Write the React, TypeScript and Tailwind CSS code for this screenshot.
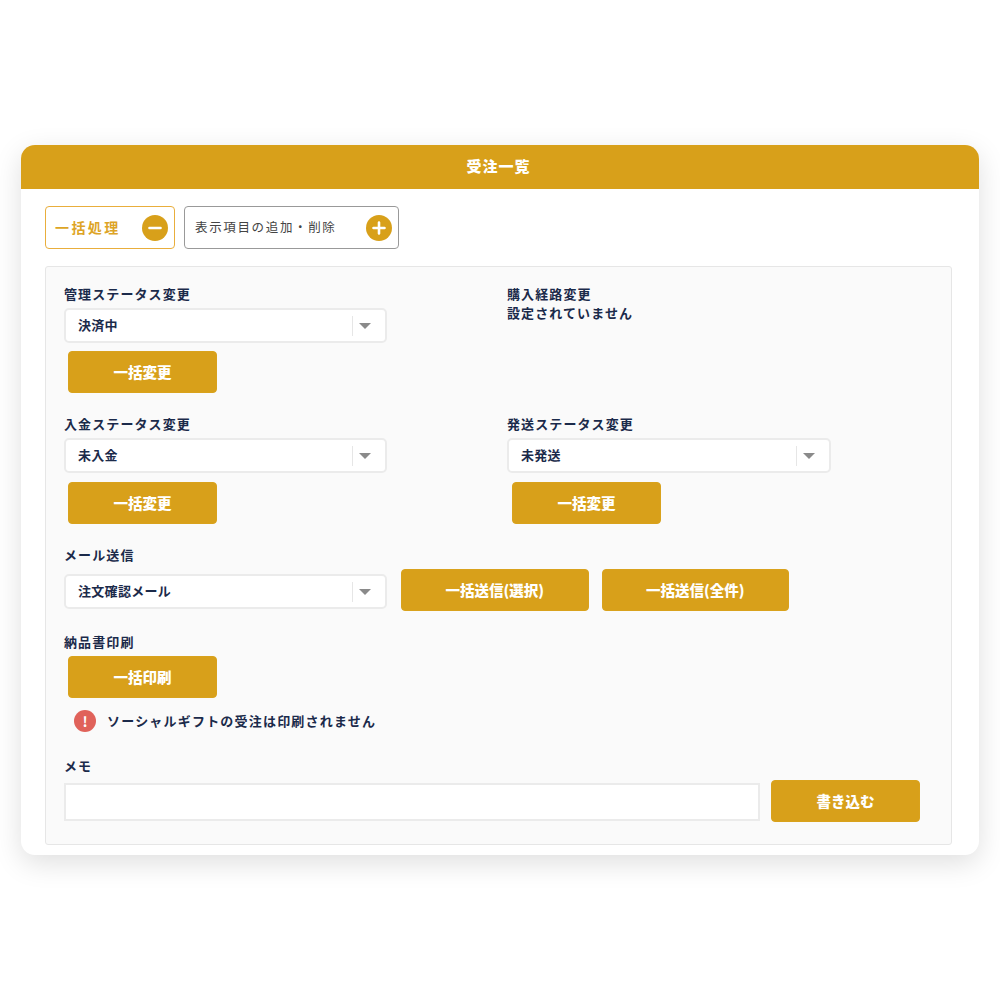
const font = { fontFamily: '"Noto Sans CJK JP", "Noto Sans", sans-serif' };

function Caret() {
  return <span className="ml-[6px] h-0 w-0 border-x-[6px] border-t-[6px] border-x-transparent border-t-[#8a8a8a]" />;
}

function Label({ children }: { children: string }) {
  return <div className="h-[18px] text-[13px] leading-[18px] font-bold tracking-[1.1px] text-[#1b2a4a]">{children}</div>;
}

function Select({ value, w = "w-[323px]" }: { value: string; w?: string }) {
  return (
    <div className={`flex h-[35px] ${w} items-center rounded-[5px] border-2 border-[#ebebeb] bg-white pl-[12px]`}>
      <span className="flex-1 pb-[2px] text-[13px] font-bold tracking-[0.3px] text-[#1b2a4a]">{value}</span>
      <span className="h-[20px] w-[1.5px] bg-[#e6e6e6]" />
      <Caret />
      <span className="w-[14px]" />
    </div>
  );
}

function Btn({ children, w = "w-[149px]", cls = "" }: { children: string; w?: string; cls?: string }) {
  return (
    <button className={`flex h-[42px] ${w} ${cls} items-center justify-center rounded-[4px] border border-[#d9a21c] bg-[#d8a01a] text-[14.5px] font-black text-white`}>
      <span className="pb-[1px]">{children}</span>
    </button>
  );
}

function Round({ plus }: { plus?: boolean }) {
  return (
    <svg width="26" height="26" viewBox="0 0 26 26" className="shrink-0">
      <circle cx="13" cy="13" r="13" fill="#d8a01a" />
      <path d={plus ? "M7.5 13h11M13 7.5v11" : "M7.5 13h11"} stroke="#fff" strokeWidth="2.6" strokeLinecap="round" />
    </svg>
  );
}

export default function App() {
  return (
    <div className="min-h-[1000px] bg-white px-[21px] pt-[145px]" style={font}>
      <div className="h-[710px] w-[958px] overflow-hidden rounded-[14px] bg-white shadow-[0_8px_28px_rgba(0,0,0,0.13)]">
        <div className="flex h-[44px] items-center justify-center bg-[#d8a01a] pb-[2px] pr-[3px] text-[15px] font-black tracking-[1px] text-white">受注一覧</div>

        <div className="px-[24px] pt-[17px]">
          <div className="flex gap-[9px]">
            <div className="flex h-[43px] w-[129.5px] items-center justify-between rounded-[4px] border border-[#e9ae3c] bg-white pl-[9px] pr-[6px]">
              <span className="text-[14px] font-bold tracking-[2.4px] text-[#dda426]">一括処理</span>
              <Round />
            </div>
            <div className="flex h-[43px] w-[215px] items-center justify-between rounded-[4px] border-[1.5px] border-[#999] bg-white pl-[10.5px] pr-[5.5px]">
              <span className="text-[12.5px] tracking-[1.65px] text-[#444]">表示項目の追加・削除</span>
              <Round plus />
            </div>
          </div>

          <div className="mt-[17px] h-[579px] w-[907px] rounded-[3px] border border-[#e6e6e6] bg-[#fafafa] pl-[18px] pt-[18px]">
            <div className="grid grid-cols-[443px_1fr]">
              <div>
                <Label>管理ステータス変更</Label>
                <div className="mt-[5px]"><Select value="決済中" /></div>
                <Btn cls="ml-[4px] mt-[8px]">一括変更</Btn>
              </div>
              <div>
                <Label>購入経路変更</Label>
                <div className="mt-[1px] text-[13px] leading-[18px] font-bold tracking-[1.1px] text-[#1b2a4a]">設定されていません</div>
              </div>
            </div>

            <div className="mt-[22px] grid grid-cols-[443px_1fr]">
              <div>
                <Label>入金ステータス変更</Label>
                <div className="mt-[5px]"><Select value="未入金" /></div>
                <Btn cls="ml-[4px] mt-[9px]">一括変更</Btn>
              </div>
              <div>
                <Label>発送ステータス変更</Label>
                <div className="mt-[5px]"><Select value="未発送" w="w-[324px]" /></div>
                <Btn cls="ml-[5px] mt-[9px]">一括変更</Btn>
              </div>
            </div>

            <div className="mt-[22px]">
              <Label>メール送信</Label>
              <div className="mt-[5px] flex items-start">
                <div className="mt-[5px]"><Select value="注文確認メール" /></div>
                <Btn w="w-[188.5px]" cls="ml-[13.5px]">一括送信(選択)</Btn>
                <Btn w="w-[187.5px]" cls="ml-[12.5px]">一括送信(全件)</Btn>
              </div>
            </div>

            <div className="mt-[22px]">
              <Label>納品書印刷</Label>
              <Btn cls="ml-[4px] mt-[5px]">一括印刷</Btn>
              <div className="ml-[10px] mt-[12px] flex h-[22px] items-center gap-[11px]">
                <span className="flex h-[22px] w-[22px] items-center justify-center rounded-full bg-[#e0625a] text-[14px] font-bold text-white">!</span>
                <span className="text-[13px] font-bold tracking-[1.2px] text-[#1b2a4a]">ソーシャルギフトの受注は印刷されません</span>
              </div>
            </div>

            <div className="mt-[25px]">
              <Label>メモ</Label>
              <div className="mt-[5px] flex items-start">
                <div className="mt-[3px] h-[38px] w-[696px] border-2 border-[#ebebeb] bg-white" />
                <Btn cls="ml-[11px]">書き込む</Btn>
              </div>
            </div>
          </div>
        </div>
      </div>
    </div>
  );
}
